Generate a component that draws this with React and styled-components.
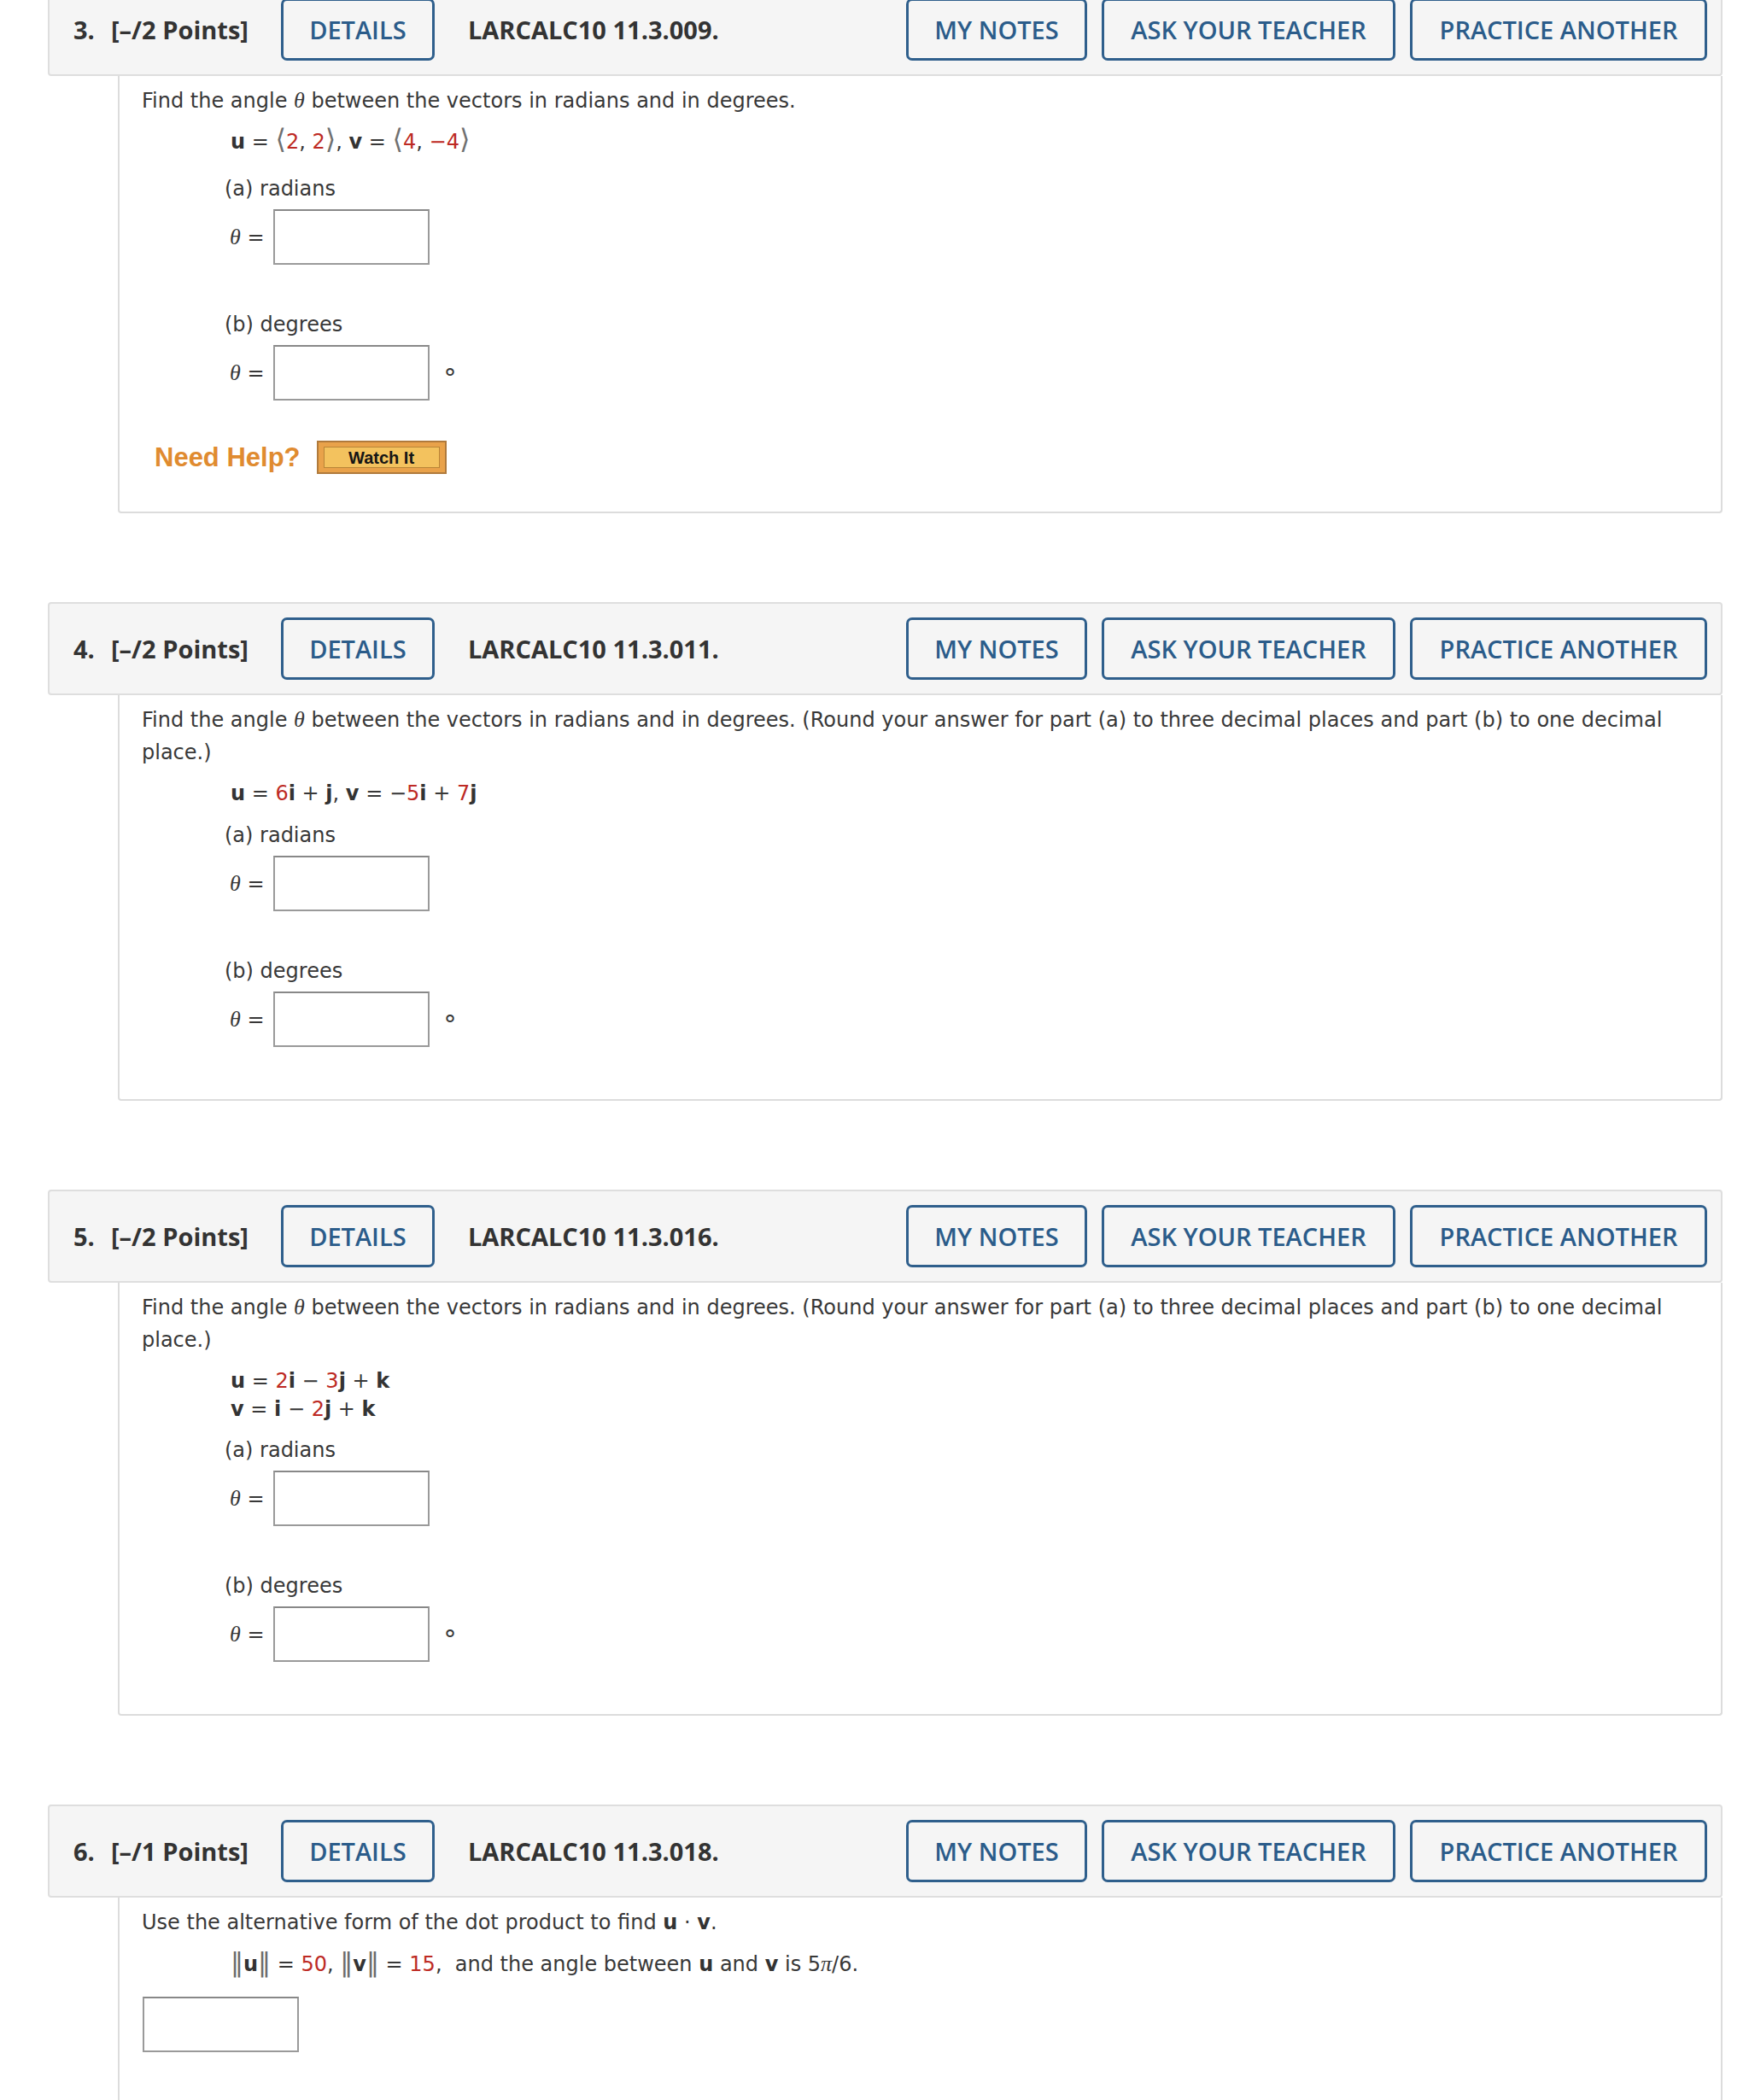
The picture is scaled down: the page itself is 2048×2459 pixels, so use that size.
import React from 'react';
import styled, { createGlobalStyle } from 'styled-components';

const GlobalStyle = createGlobalStyle`
  body {
    margin: 0;
    background: #fff;
    font-family: "DejaVu Sans", Verdana, sans-serif;
    color: #383838;
  }
`;

const Page = styled.div`
  width: 1961px;
  margin: -20px 0 0 56px;
  display: flex;
  flex-direction: column;
  gap: 104px;
`;

const Header = styled.div`
  height: 109px;
  box-sizing: border-box;
  display: flex;
  align-items: center;
  padding: 0 16px 0 28px;
  background: #f5f5f5;
  border: 2px solid #dedede;
  border-radius: 4px;
  font-family: "Open Sans", sans-serif;
  color: #333;
`;

const Num = styled.span`
  font-weight: 700;
  font-size: 29px;
  width: 44px;
`;

const Points = styled.span`
  font-weight: 700;
  font-size: 29px;
  margin-right: 38px;
  white-space: nowrap;
`;

const Code = styled.span`
  font-weight: 700;
  font-size: 29px;
  margin-left: 39px;
  flex: 1;
`;

const Buttons = styled.div`
  display: flex;
  gap: 17px;
`;

const Button = styled.span`
  height: 73px;
  box-sizing: border-box;
  display: inline-flex;
  align-items: center;
  justify-content: center;
  width: ${({ w }) => w}px;
  border: 3px solid #2f5f8c;
  border-radius: 7px;
  color: #2b5c8a;
  font-size: 29px;
  font-weight: 600;
  white-space: nowrap;
`;

const Body = styled.div`
  margin-left: 82px;
  border: 2px solid #dcdcdc;
  border-top: none;
  border-radius: 0 0 4px 4px;
  padding: 10px 30px ${({ pb }) => pb}px 26px;
  font-size: 24px;
  line-height: 38px;
`;

const Prompt = styled.p`
  margin: 0;
`;

const MathLine = styled.div`
  margin-top: 13px;
  padding-left: 104px;
  line-height: 33px;
`;

const B = styled.b`
  font-weight: 700;
  color: #333;
`;

const Red = styled.span`
  color: #bd2a24;
`;

const Angle = styled.span`
  color: #707070;
  font-size: 32px;
  line-height: 24px;
`;

const Bars = styled.span`
  color: #6b6b6b;
  font-size: 30px;
  line-height: 24px;
`;

const Theta = styled.i`
  font-family: "Liberation Serif", serif;
  font-size: 26px;
`;

const Part = styled.div`
  margin-top: ${({ mt }) => mt}px;
  padding-left: 97px;
`;

const AnswerRow = styled.div`
  display: flex;
  align-items: center;
  margin-top: 5px;
  padding-left: 6px;
  gap: 10px;
`;

const Eq = styled.span`
  white-space: nowrap;
`;

const Box = styled.span`
  display: block;
  width: 183px;
  height: 65px;
  box-sizing: border-box;
  border: 2px solid #9a9a9a;
  border-top-color: #888;
  background: #fff;
  margin-left: ${({ ml }) => ml || 0}px;
  margin-top: ${({ mt }) => mt || 0}px;
`;

const Degree = styled.span`
  font-size: 30px;
  line-height: 1;
  margin-left: 7px;
  margin-top: 12px;
`;

const Help = styled.div`
  display: flex;
  align-items: center;
  margin: 47px 0 0 15px;
  gap: 19px;
`;

const HelpText = styled.span`
  font-family: "Liberation Sans", Arial, sans-serif;
  font-weight: 700;
  font-size: 31px;
  color: #e08b30;
`;

const WatchIt = styled.span`
  width: 152px;
  height: 39px;
  box-sizing: border-box;
  padding: 5px 6px;
  background: #e9a24a;
  border: 2px solid #b07a3c;
  display: flex;
`;

const WatchInner = styled.span`
  flex: 1;
  display: flex;
  align-items: center;
  justify-content: center;
  background: #f3c25e;
  border: 1px solid #b98537;
  font-family: "Liberation Sans", Arial, sans-serif;
  font-weight: 700;
  font-size: 20px;
  color: #151515;
`;

const Answer = ({ label, degree, mt }) => (
  <Part mt={mt}>
    <div>{label}</div>
    <AnswerRow>
      <Eq>
        <Theta>θ</Theta> =
      </Eq>
      <Box />
      {degree && <Degree>°</Degree>}
    </AnswerRow>
  </Part>
);

const Card = ({ num, points, code, pb, children }) => (
  <section>
    <Header>
      <Num>{num}.</Num>
      <Points>[–/{points} Points]</Points>
      <Button w={180}>DETAILS</Button>
      <Code>{code}</Code>
      <Buttons>
        <Button w={212}>MY NOTES</Button>
        <Button w={344}>ASK YOUR TEACHER</Button>
        <Button w={348}>PRACTICE ANOTHER</Button>
      </Buttons>
    </Header>
    <Body pb={pb}>{children}</Body>
  </section>
);

const roundNote =
  ' (Round your answer for part (a) to three decimal places and part (b) to one decimal place.)';

const AngleParts = ({ firstMt }) => (
  <>
    <Answer label="(a) radians" mt={firstMt} />
    <Answer label="(b) degrees" mt={51} degree />
  </>
);

export default function App() {
  return (
    <>
      <GlobalStyle />
      <Page>
        <Card num={3} points={2} code="LARCALC10 11.3.009." pb={44}>
          <Prompt>
            Find the angle <Theta>θ</Theta> between the vectors in radians and in degrees.
          </Prompt>
          <MathLine>
            <B>u</B> = <Angle>⟨</Angle><Red>2</Red>, <Red>2</Red><Angle>⟩</Angle>, <B>v</B> ={' '}
            <Angle>⟨</Angle><Red>4</Red>, <Red>−4</Red><Angle>⟩</Angle>
          </MathLine>
          <AngleParts firstMt={19} />
          <Help>
            <HelpText>Need Help?</HelpText>
            <WatchIt>
              <WatchInner>Watch It</WatchInner>
            </WatchIt>
          </Help>
        </Card>

        <Card num={4} points={2} code="LARCALC10 11.3.011." pb={61}>
          <Prompt>
            Find the angle <Theta>θ</Theta> between the vectors in radians and in degrees.{roundNote}
          </Prompt>
          <MathLine>
            <B>u</B> = <Red>6</Red><B>i</B> + <B>j</B>, <B>v</B> = −<Red>5</Red><B>i</B> + <Red>7</Red><B>j</B>
          </MathLine>
          <AngleParts firstMt={13} />
        </Card>

        <Card num={5} points={2} code="LARCALC10 11.3.016." pb={61}>
          <Prompt>
            Find the angle <Theta>θ</Theta> between the vectors in radians and in degrees.{roundNote}
          </Prompt>
          <MathLine>
            <B>u</B> = <Red>2</Red><B>i</B> − <Red>3</Red><B>j</B> + <B>k</B>
            <br />
            <B>v</B> = <B>i</B> − <Red>2</Red><B>j</B> + <B>k</B>
          </MathLine>
          <AngleParts firstMt={12} />
        </Card>

        <Card num={6} points={1} code="LARCALC10 11.3.018." pb={80}>
          <Prompt>
            Use the alternative form of the dot product to find <B>u</B> · <B>v</B>.
          </Prompt>
          <MathLine>
            <Bars>‖</Bars><B>u</B><Bars>‖</Bars> = <Red>50</Red>, <Bars>‖</Bars><B>v</B><Bars>‖</Bars> ={' '}
            <Red>15</Red>,&nbsp; and the angle between <B>u</B> and <B>v</B> is 5<Theta>π</Theta>/6.
          </MathLine>
          <Box ml={1} mt={21} />
        </Card>
      </Page>
    </>
  );
}
